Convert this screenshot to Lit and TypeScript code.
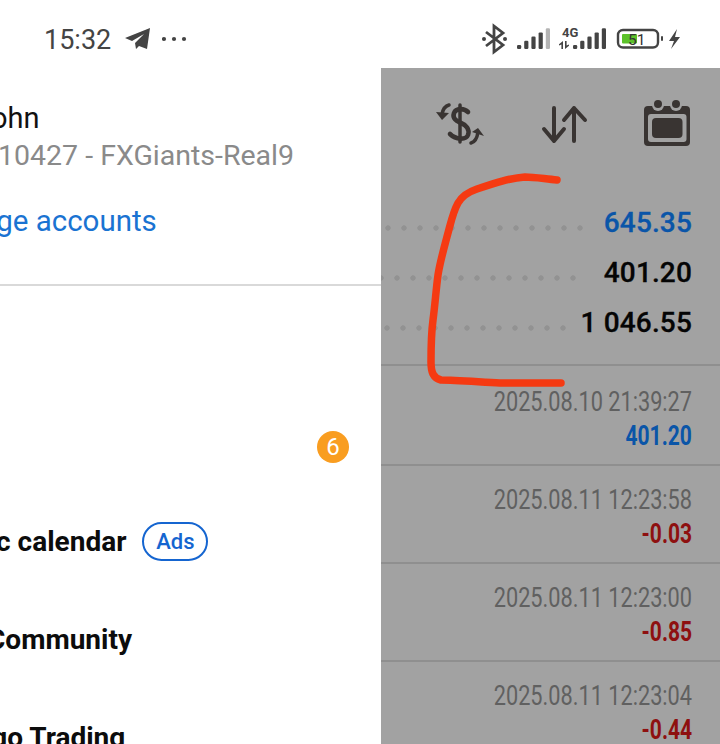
import { LitElement, html, css, svg } from "lit";
import { customElement } from "lit/decorators.js";

const menu = [
  { text: "", offset: 0, badge: "6", ads: false },
  { text: "Economic calendar", offset: -113, badge: "", ads: true },
  { text: "Community", offset: -13, badge: "", ads: false },
  { text: "Algo Trading", offset: -35, badge: "", ads: false },
];
const summary = [
  { value: "645.35", cls: "blue", pad: 388, end: 588 },
  { value: "401.20", cls: "", pad: 381, end: 581 },
  { value: "1 046.55", cls: "", pad: 387, end: 570 },
];
const deals = [
  { date: "2025.08.10 21:39:27", value: "401.20", cls: "blue" },
  { date: "2025.08.11 12:23:58", value: "-0.03", cls: "red" },
  { date: "2025.08.11 12:23:00", value: "-0.85", cls: "red" },
  { date: "2025.08.11 12:23:04", value: "-0.44", cls: "red" },
];

const bars = (x0: number, h0: number) =>
  [0, 1, 2, 3, 4].map((i) => {
    const h = h0 + i * 4.2;
    return svg`<rect x=${x0 + i * 7.2} y=${49 - h} width="4.2" height=${h} rx="1.2" fill=${i === 4 && x0 < 560 ? "#b4b4b4" : "#444"} />`;
  });

@customElement("app-root")
export class AppRoot extends LitElement {
  static styles = css`
    :host { display: block; width: 720px; height: 744px; overflow: hidden; position: relative; background: #fff; font-family: Roboto, "Liberation Sans", sans-serif; }
    .status { height: 68px; display: flex; align-items: center; box-sizing: border-box; padding: 13px 0 0 44px; color: #444; position: relative; }
    .time { font-size: 27px; width: 81px; line-height: 32px; margin-top: -2px; }
    .plane { width: 26px; height: 24px; margin-top: -3px; }
    .more { width: 26px; height: 8px; margin: -3px 0 0 11px; }
    .sys { position: absolute; left: 481px; top: 20px; width: 200px; height: 36px; }
    .body { display: flex; height: 676px; }
    .drawer { width: 381px; flex: none; overflow: hidden; }
    .name { font-size: 29px; line-height: 34px; color: #111; margin: 33px 0 0 -25px; white-space: nowrap; }
    .acct { font-size: 28.5px; line-height: 32px; color: #8a8a8a; margin: 5px 0 0 -34px; white-space: nowrap; }
    .manage { font-size: 29.5px; line-height: 32px; color: #1a73d2; margin: 33px 0 0 -78px; white-space: nowrap; }
    .rule { height: 2px; background: #d9d9d9; margin-top: 47px; }
    .menu { padding-top: 108px; }
    .item { height: 98px; display: flex; align-items: center; white-space: nowrap; font-size: 28px; font-weight: 700; color: #0c0c0c; }
    .item.first { justify-content: flex-end; padding: 8px 32px 0 0; box-sizing: border-box; }
    .badge { width: 32px; height: 32px; border-radius: 50%; background: #f99d20; color: #fff; font-size: 24px; font-weight: 400; display: flex; align-items: center; justify-content: center; }
    .ads { margin-left: 16px; height: 39px; width: 66px; box-sizing: border-box; border: 2px solid #1565d0; border-radius: 20px; color: #1565d0; font-size: 22px; font-weight: 500; display: flex; align-items: center; justify-content: center; }
    .panel { flex: 1; background: #a2a2a2; overflow: hidden; }
    .tools { height: 129px; display: flex; }
    .tools svg { width: 339px; height: 129px; }
    .sum { height: 50px; display: flex; align-items: center; position: relative; justify-content: flex-end; padding-right: 28px; font-size: 28px; font-weight: 500; color: #050505; letter-spacing: 0.15px; -webkit-text-stroke: 0.3px currentColor; }
    .sum .blue { color: #0a55a8; }
    .leader { position: absolute; top: 28px; height: 6px; background-image: radial-gradient(circle at 3px 3px, #929292 2.4px, transparent 3px); background-size: 16px 6px; }
    .deals { margin-top: 17px; }
    .deal { height: 98px; border-top: 2px solid #8f8f8f; box-sizing: border-box; display: flex; flex-direction: column; align-items: flex-end; padding: 19px 28px 0 0; }
    .deal.first { height: 100px; padding-top: 21px; }
    .date { font-size: 27.5px; line-height: 30px; color: #606060; transform: scaleX(0.79); transform-origin: right center; white-space: nowrap; }
    .val { font-size: 27.5px; line-height: 30px; font-weight: 700; margin-top: 4px; transform: scaleX(0.765); transform-origin: right center; }
    .val.blue { color: #0a55a8; }
    .val.red { color: #8e1010; }
    .ink { position: absolute; left: 0; top: 0; width: 720px; height: 744px; pointer-events: none; }
  `;

  render() {
    return html`
      <div class="status">
        <span class="time">15:32</span>
        <svg class="plane" viewBox="0 0 26 24"><path fill="#444" d="M0 11 L25 1 L22 22 L14 19 L11 22 L10 16 L19 7 L7 14 Z" /></svg>
        <svg class="more" viewBox="0 0 26 8"><circle cx="2" cy="4" r="2.1" fill="#444" /><circle cx="12" cy="4" r="2.1" fill="#444" /><circle cx="22" cy="4" r="2.1" fill="#444" /></svg>
        <svg class="sys" viewBox="481 20 200 36">
          <path fill="none" stroke="#444" stroke-width="2.8" d="M486 32 L503 45 L494 52 L494 26 L503 33 L486 46" />
          <circle cx="484" cy="39" r="2" fill="#444" /><circle cx="505" cy="39" r="2" fill="#444" />
          ${bars(517, 4)}
          <text x="562" y="37" font-size="13" font-weight="700" fill="#444" font-family="Roboto, sans-serif">4G</text>
          <path fill="#444" d="M563 41 v8 h-1.6 v-4.5 l-2.4 1 v-1.2 z M565 41 h1.6 v4.5 l2.4 -1 v1.2 l-4 3.3 z" />
          ${bars(573, 4)}
          <rect x="618" y="30" width="40" height="17.5" rx="5" fill="none" stroke="#444" stroke-width="2.4" />
          <rect x="622" y="34" width="15" height="9.5" rx="1" fill="#5cc22a" />
          <text x="628" y="45" font-size="15.5" fill="#333" font-family="Roboto, sans-serif">51</text>
          <rect x="661" y="36" width="2" height="5" rx="1" fill="#444" />
          <path fill="#444" d="M677 29 L669 41 L674 41 L671 49 L680 37 L675 37 Z" />
        </svg>
      </div>
      <div class="body">
        <div class="drawer">
          <div class="name">John</div>
          <div class="acct">5110427 - FXGiants-Real9</div>
          <div class="manage">Manage accounts</div>
          <div class="rule"></div>
          <div class="menu">
            ${menu.map((m, i) => html`
              <div class="item ${i === 0 ? "first" : ""}">
                ${m.badge ? html`<span class="badge">${m.badge}</span>` : ""}
                ${m.text ? html`<span style="margin-left:${m.offset}px">${m.text}</span>` : ""}
                ${m.ads ? html`<span class="ads">Ads</span>` : ""}
              </div>`)}
          </div>
        </div>
        <div class="panel">
          <div class="tools">
            <svg viewBox="381 68 339 129">
              <g fill="none" stroke="#393432" stroke-linecap="round" stroke-linejoin="round">
                <path stroke-width="3.5" d="M460 105 V142" />
                <path stroke-width="4.6" d="M468 112 C464 108 456 108 454 113 C452 119 457 121 461 123 C466 125 470 129 468 135 C466 140 456 140 450 134" />
                <path stroke-width="3.5" d="M449 105 C445 106 443 109 442 114" />
                <path stroke-width="3.5" d="M471 143 C475 142 477 139 478 132" />
                <path stroke-width="4" d="M554 108 V141 M544 129 L554 141 L564 129" />
                <path stroke-width="4" d="M574 108 V141 M564 120 L574 108 L585 120" />
              </g>
              <path fill="#393432" d="M436 112 L449 113 L442 120 Z M484 136 L472 132 L478 128 Z" />
              <rect x="644" y="106" width="46" height="40" rx="4" fill="#393432" />
              <rect x="648" y="114" width="38.5" height="28" rx="3" fill="#a2a2a2" />
              <rect x="652" y="118" width="30.5" height="20" rx="4" fill="#393432" />
              <circle cx="658" cy="105" r="6" fill="#a2a2a2" /><circle cx="676" cy="105" r="6" fill="#a2a2a2" />
              <circle cx="658" cy="104" r="4" fill="#393432" /><circle cx="676" cy="104" r="4" fill="#393432" />
            </svg>
          </div>
          ${summary.map((s) => html`
            <div class="sum">
              <span class="leader" style="left:${s.pad - 384}px;width:${s.end - s.pad}px"></span>
              <span class=${s.cls}>${s.value}</span>
            </div>`)}
          <div class="deals">
            ${deals.map((d, i) => html`
              <div class="deal ${i === 0 ? "first" : ""}">
                <span class="date">${d.date}</span>
                <span class="val ${d.cls}">${d.value}</span>
              </div>`)}
          </div>
        </div>
      </div>
      <svg class="ink" viewBox="0 0 720 744">
        <path fill="none" stroke="#f53a12" stroke-width="7.5" stroke-linecap="round" stroke-linejoin="round"
          d="M557 180 C545 179 535 177 525 177 C510 178 495 183 477 189 C468 192 462 196 458 203 C453 212 451 222 448 233 C444 248 440 262 438 275 C436 290 435 305 433 320 C431 335 431 350 431 362 C431 372 433 378 441 380 C455 380 480 382 500 383 C520 383 540 383 561 383" />
      </svg>
    `;
  }
}
